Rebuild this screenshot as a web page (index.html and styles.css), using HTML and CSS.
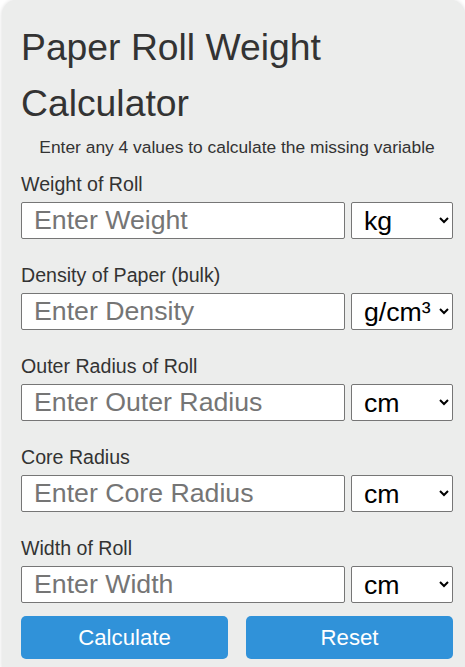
FILE: index.html
```html
<!DOCTYPE html>
<html lang="en">
<head>
  <meta charset="UTF-8">
  <meta name="viewport" content="width=device-width, initial-scale=1.0">
  <title>Paper Roll Weight Calculator</title>
  <link rel="stylesheet" href="styles.css">
</head>
<body>
  <!-- Calculator Card -->
  <div class="calculator">
    <h1>Paper Roll Weight Calculator</h1>
    <p class="intro">Enter any 4 values to calculate the missing variable</p>

    <div class="field">
      <label for="weight">Weight of Roll</label>
      <div class="field-row">
        <input type="number" id="weight" placeholder="Enter Weight">
        <select id="weight-unit">
          <option>kg</option>
          <option>g</option>
          <option>lb</option>
        </select>
      </div>
    </div>

    <div class="field">
      <label for="density">Density of Paper (bulk)</label>
      <div class="field-row">
        <input type="number" id="density" placeholder="Enter Density">
        <select id="density-unit">
          <option>g/cm³</option>
          <option>kg/m³</option>
        </select>
      </div>
    </div>

    <div class="field">
      <label for="outer-radius">Outer Radius of Roll</label>
      <div class="field-row">
        <input type="number" id="outer-radius" placeholder="Enter Outer Radius">
        <select id="outer-unit">
          <option>cm</option>
          <option>mm</option>
          <option>m</option>
        </select>
      </div>
    </div>

    <div class="field">
      <label for="core-radius">Core Radius</label>
      <div class="field-row">
        <input type="number" id="core-radius" placeholder="Enter Core Radius">
        <select id="core-unit">
          <option>cm</option>
          <option>mm</option>
          <option>m</option>
        </select>
      </div>
    </div>

    <div class="field last">
      <label for="width">Width of Roll</label>
      <div class="field-row">
        <input type="number" id="width" placeholder="Enter Width">
        <select id="width-unit">
          <option>cm</option>
          <option>mm</option>
          <option>m</option>
        </select>
      </div>
    </div>

    <div class="buttons">
      <button type="button" id="calculate">Calculate</button>
      <button type="button" id="reset">Reset</button>
    </div>
  </div>
</body>
</html>
```

FILE: styles.css
```css
/* Basic Reset */
* {
  margin: 0;
  padding: 0;
  box-sizing: border-box;
}

body {
  font-family: "Liberation Sans", Arial, sans-serif;
  background: #fff;
  color: #333;
}

.calculator {
  margin-left: 2px;
  padding: 19px 12px 20px 19px;
  background: #ecedec;
  border-radius: 15px;
  box-shadow: 0 0 4px rgba(0, 0, 0, 0.15);
}

.calculator h1 {
  font-size: 37.3px;
  font-weight: normal;
  line-height: 56px;
  color: #333;
}

.intro {
  margin-top: 6px;
  margin-bottom: 15px;
  text-align: center;
  font-size: 17.4px;
}

.field {
  margin-bottom: 25px;
}

.field.last {
  margin-bottom: 13px;
}

.field label {
  display: block;
  font-size: 19.6px;
  line-height: 23px;
  margin-bottom: 6px;
}

.field-row {
  display: grid;
  grid-template-columns: 324px 102px;
  gap: 6px;
}

.field-row input,
.field-row select {
  height: 37px;
  font-family: inherit;
  font-size: 26.7px;
  border: 1px solid #767676;
  border-radius: 2px;
  background: #fff;
  color: #000;
  outline: none;
}

.field-row input {
  padding: 0 12px;
}

.field-row input::placeholder {
  color: #757575;
}

.field-row select {
  padding-left: 8px;
}

.buttons {
  display: grid;
  grid-template-columns: 207px 207px;
  gap: 18px;
}

.buttons button {
  height: 43px;
  border: none;
  border-radius: 5px;
  background: #3092d9;
  color: #fff;
  font-family: inherit;
  font-size: 22.2px;
  cursor: pointer;
}

.buttons button:hover {
  background: #2578b8;
}
```
